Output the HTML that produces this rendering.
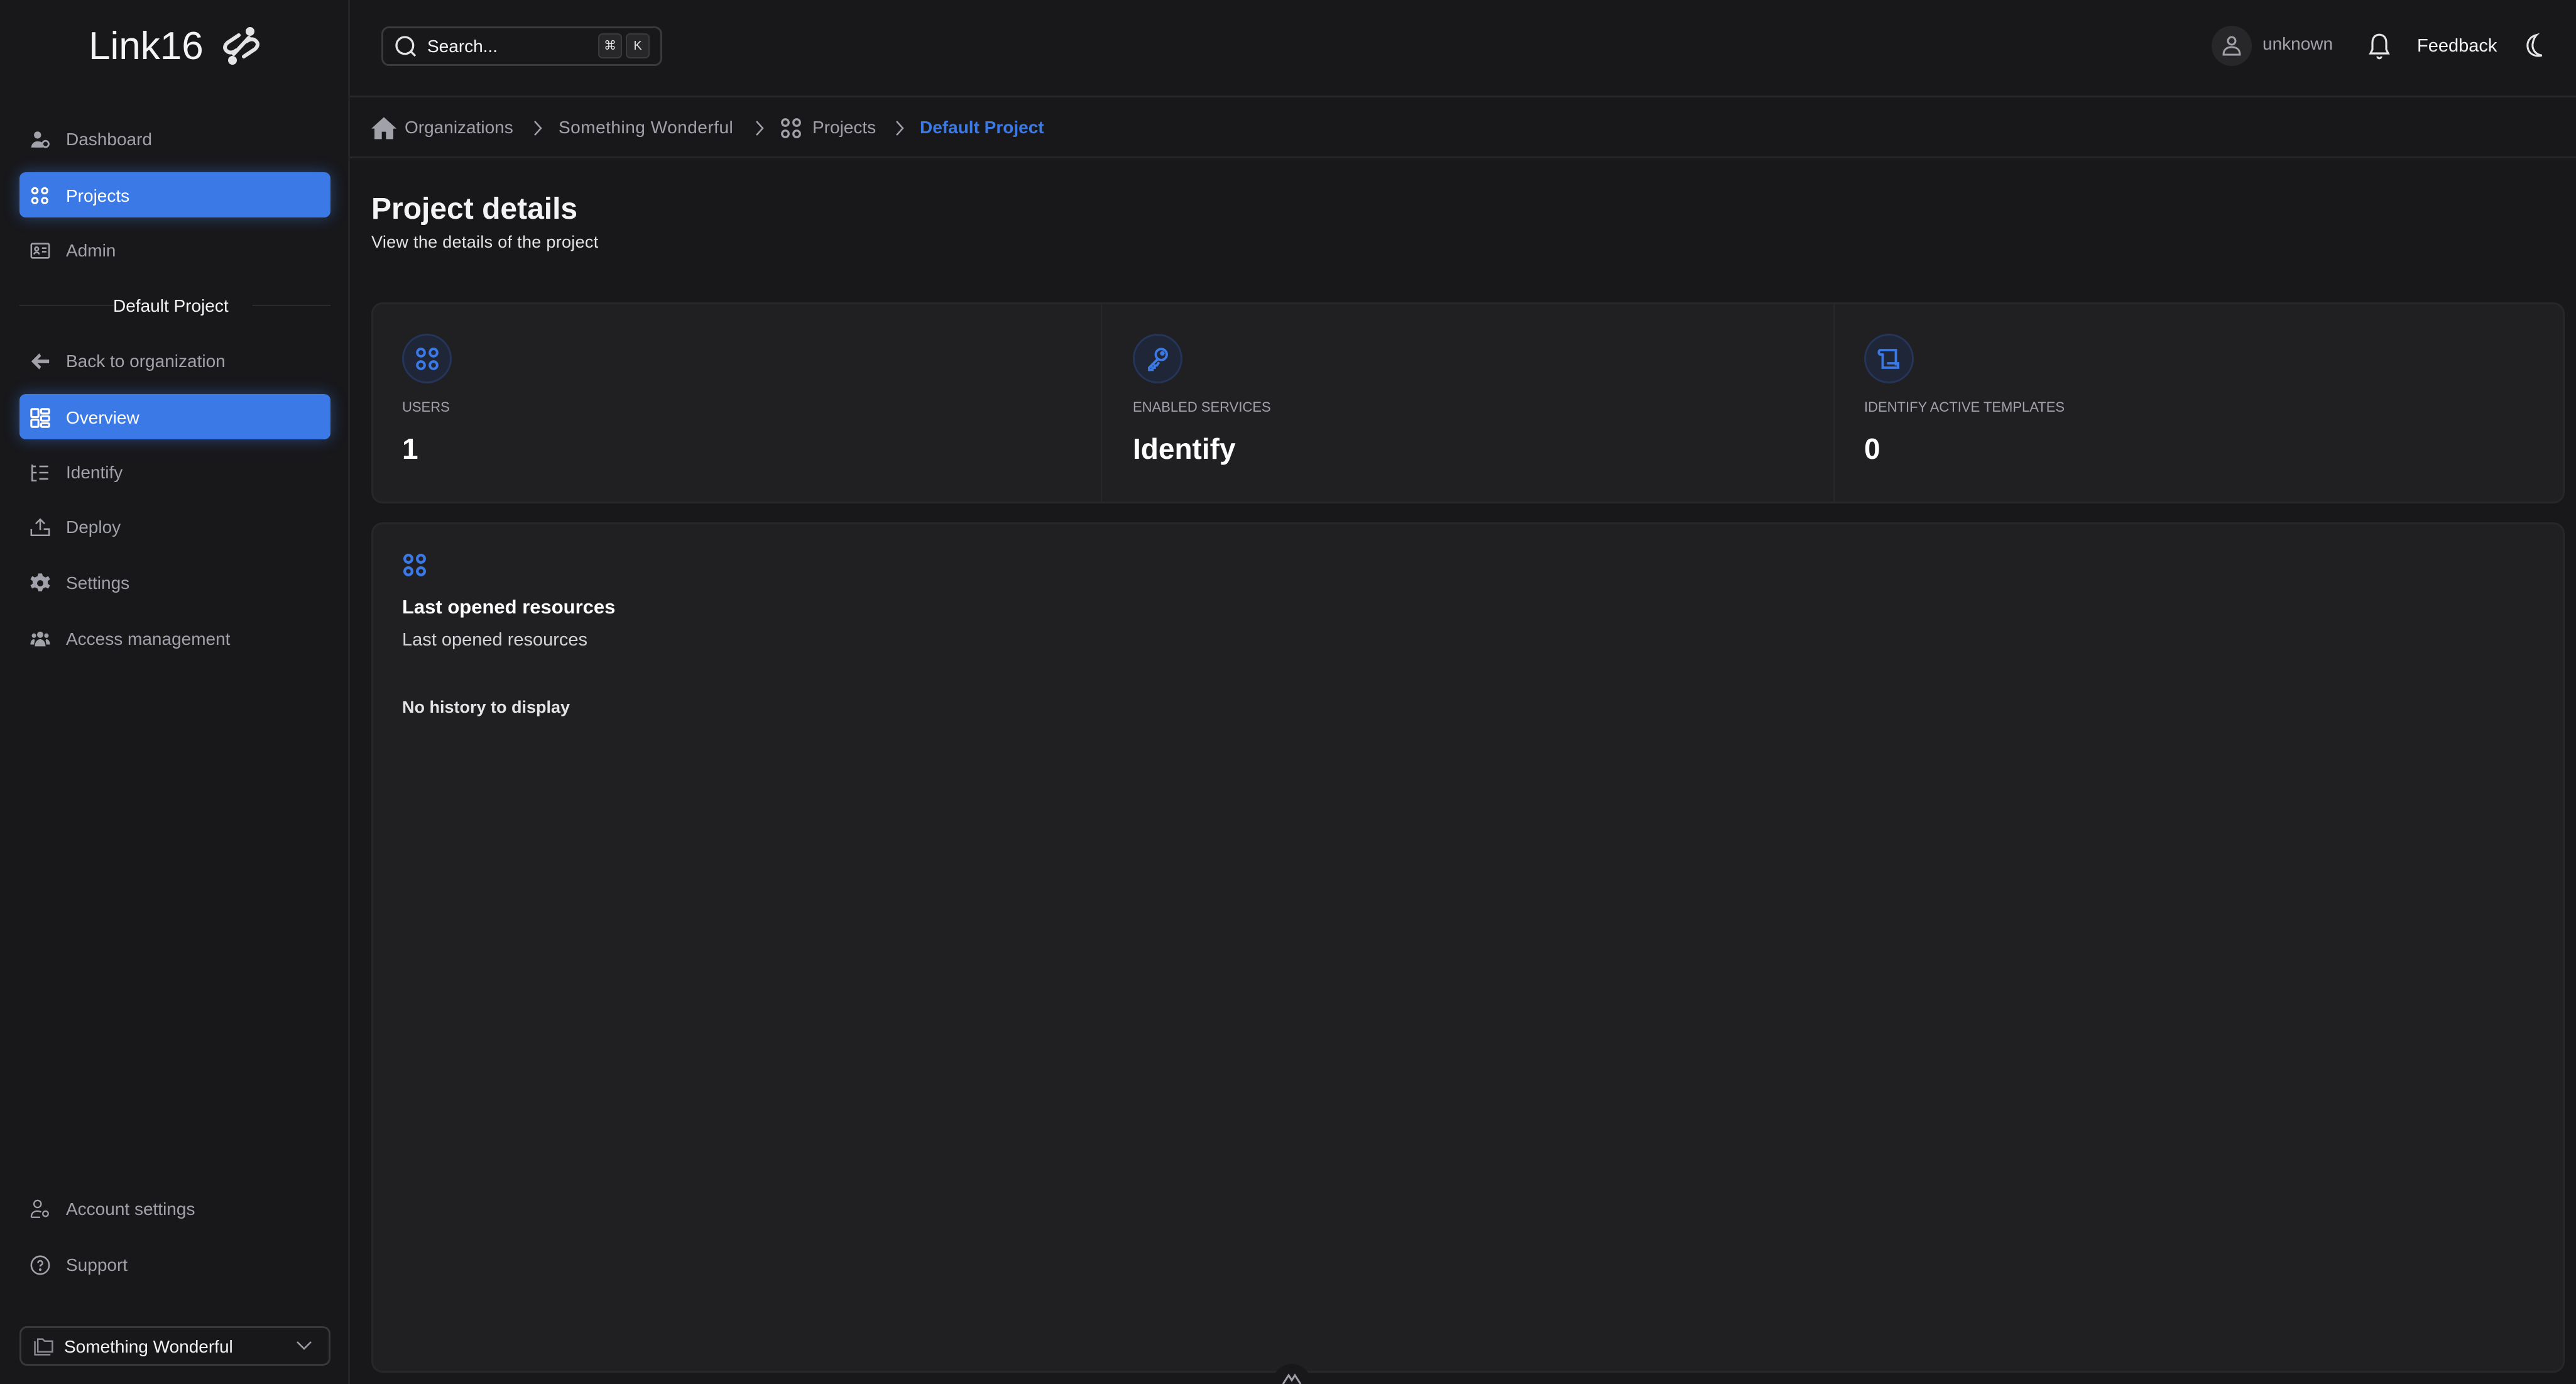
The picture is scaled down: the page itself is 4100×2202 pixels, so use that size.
<!DOCTYPE html>
<html><head><meta charset="utf-8"><style>
*{margin:0;padding:0;box-sizing:border-box}
html,body{width:4100px;height:2202px;overflow:hidden;background:#18181b}
#w{position:relative;width:4100px;height:2202px;overflow:hidden;background:#18181b;font-family:"Liberation Sans",sans-serif;color:#e4e4e7}
.a{position:absolute}
.side{left:0;top:0;width:557px;height:2202px;background:#18181b;border-right:3px solid #232326}
.nav{position:absolute;left:31px;width:495px;height:72px;display:flex;align-items:center;font-size:28px;color:#a1a1aa;padding-left:16px;padding-top:4px}
.nav svg{width:34px;height:34px;margin-right:24px;flex:none}
.nav.act{background:#3b79e6;color:#fff;border-radius:10px;box-shadow:0 0 24px rgba(59,121,230,.45)}
.t{position:absolute;white-space:nowrap}
.card{position:absolute;background:#202023;border:3px solid #27272a;border-radius:18px}
.ic{position:absolute;width:79px;height:79px;border-radius:50%;background:#1f2637;border:3px solid #243559;display:flex;align-items:center;justify-content:center}
.lbl{font-size:22px;color:#a1a1aa}
.val{font-size:46px;font-weight:bold;color:#fff}
</style></head><body><div id="w">
<div class="a side"></div>
<div class="t" style="left:141px;top:38px;font-size:62px;color:#f4f4f5">Link16</div>
<svg class="a" style="left:350px;top:42px" width="68" height="62" viewBox="0 0 68 62" fill="none" stroke="#e4e4e7" stroke-width="6" stroke-linecap="round"><path d="M30 14 L12 26 Q4 34 12 40 Q18 44 26 38"/><path d="M38 48 L56 36 Q64 28 56 22 Q50 18 42 24"/><path d="M22 44 L46 18"/><circle cx="48" cy="8" r="4" fill="#e4e4e7"/><circle cx="20" cy="54" r="4" fill="#e4e4e7"/></svg>

<div class="nav" style="top:184px"><svg viewBox="0 0 24 24" fill="#a1a1aa"><circle cx="9" cy="7" r="4"/><path d="M2 21c0-5 4-7 7-7s5 1 6 2v5z"/><circle cx="18" cy="17" r="3.5" fill="none" stroke="#a1a1aa" stroke-width="2"/></svg>Dashboard</div>
<div class="nav act" style="top:274px"><svg viewBox="0 0 24 24" fill="none" stroke="#fff" stroke-width="2.2"><circle cx="6" cy="6" r="3"/><circle cx="17" cy="6" r="3"/><circle cx="6" cy="17" r="3"/><circle cx="17" cy="17" r="3"/></svg>Projects</div>
<div class="nav" style="top:361px"><svg viewBox="0 0 24 24" fill="none" stroke="#a1a1aa" stroke-width="1.8"><rect x="2" y="4" width="20" height="16" rx="1.5"/><circle cx="8" cy="10" r="2"/><path d="M5 16c1-3 5-3 6 0M14 9h5M14 13h5"/></svg>Admin</div>
<div class="a" style="left:31px;top:485px;width:150px;border-top:2px solid #2a2a2e"></div>
<div class="a" style="left:402px;top:485px;width:124px;border-top:2px solid #2a2a2e"></div>
<div class="t" style="left:180px;top:471px;font-size:28px;color:#f4f4f5">Default Project</div>
<div class="nav" style="top:537px"><svg viewBox="0 0 24 24" fill="#a1a1aa"><path d="M11 3 L2 12 L11 21 L13 18 L9 14 H22 V10 H9 L13 6Z"/></svg>Back to organization</div>
<div class="nav act" style="top:627px"><svg viewBox="0 0 24 24" fill="none" stroke="#fff" stroke-width="2.2"><rect x="2" y="2" width="8" height="9" rx="1"/><rect x="2" y="14" width="8" height="8" rx="1"/><rect x="13" y="2" width="9" height="5" rx="1"/><rect x="13" y="10" width="9" height="5" rx="1"/><rect x="13" y="18" width="9" height="4" rx="1"/></svg>Overview</div>
<div class="nav" style="top:714px"><svg viewBox="0 0 24 24" fill="none" stroke="#a1a1aa" stroke-width="1.8"><path d="M3 3v18h5M3 12h5M11 5h10M11 12h10M11 19h10M3 5h4"/></svg>Identify</div>
<div class="nav" style="top:801px"><svg viewBox="0 0 24 24" fill="none" stroke="#a1a1aa" stroke-width="1.8"><path d="M12 15V3M7 8l5-5 5 5M2 14v7h20v-7h-6"/></svg>Deploy</div>
<div class="nav" style="top:890px"><svg viewBox="0 0 24 24" fill="#a1a1aa"><path d="M10 1h4l1 3 3 1.5 3-1.5 2 3.5-2.5 2v3l2.5 2-2 3.5-3-1.5-3 1.5-1 3h-4l-1-3-3-1.5-3 1.5-2-3.5 2.5-2v-3L1 7.5 3 4l3 1.5L9 4z"/><circle cx="12" cy="12" r="3.5" fill="#18181b"/></svg>Settings</div>
<div class="nav" style="top:979px"><svg viewBox="0 0 24 24" fill="#a1a1aa"><circle cx="12" cy="7" r="3.5"/><circle cx="5" cy="8" r="2.5"/><circle cx="19" cy="8" r="2.5"/><path d="M6 20c0-5 3-8 6-8s6 3 6 8zM1 18c0-4 2-6 4-6l1 1-1 5zM23 18c0-4-2-6-4-6l-1 1 1 5z"/></svg>Access management</div>
<div class="nav" style="top:1886px"><svg viewBox="0 0 24 24" fill="none" stroke="#a1a1aa" stroke-width="1.6"><circle cx="9" cy="6" r="4"/><path d="M2 21c0-5 3-7 7-7 2 0 3 .5 4 1M2 21h10"/><circle cx="18" cy="17" r="3"/></svg>Account settings</div>
<div class="nav" style="top:1975px"><svg viewBox="0 0 24 24" fill="none" stroke="#a1a1aa" stroke-width="1.8"><circle cx="12" cy="12" r="10"/><path d="M9.5 9.5a2.5 2.5 0 1 1 3.5 2.3c-.7.4-1 1-1 1.7"/><circle cx="12" cy="17" r=".6" fill="#a1a1aa"/></svg>Support</div>
<div class="a" style="left:31px;top:2110px;width:495px;height:63px;border:3px solid #38383c;border-radius:12px;display:flex;align-items:center;padding-left:18px;padding-top:3px;font-size:28px;color:#f4f4f5"><svg width="38" height="34" viewBox="0 0 24 22" fill="none" stroke="#8a8a92" stroke-width="1.6" style="margin-right:12px"><path d="M2 5v14h16"/><path d="M5 3h5l2 2h8v11H5z"/></svg>Something Wonderful<svg class="a" style="right:26px;top:20px" width="26" height="16" viewBox="0 0 26 16" fill="none" stroke="#a1a1aa" stroke-width="2.5"><path d="M2 2l11 11 11-11"/></svg></div>

<div class="a" style="left:557px;top:152px;width:3543px;border-top:3px solid #27272a"></div>
<div class="a" style="left:557px;top:249px;width:3543px;border-top:3px solid #27272a"></div>
<div class="a" style="left:607px;top:42px;width:447px;height:63px;border:3px solid #3a3a3e;border-radius:12px"></div>
<svg class="a" style="left:626px;top:54px" width="40" height="40" viewBox="0 0 24 24" fill="none" stroke="#e4e4e7" stroke-width="2"><circle cx="11" cy="11" r="8"/><path d="M17 17l4 4"/></svg>
<div class="t" style="left:680px;top:58px;font-size:28px;color:#f4f4f5">Search...</div>
<div class="a" style="left:952px;top:53px;width:38px;height:40px;border:2px solid #3a3a3e;border-radius:7px;background:#27272a;font-size:20px;text-align:center;line-height:36px;color:#e4e4e7">⌘</div>
<div class="a" style="left:996px;top:53px;width:38px;height:40px;border:2px solid #3a3a3e;border-radius:7px;background:#27272a;font-size:20px;text-align:center;line-height:36px;color:#e4e4e7">K</div>

<div class="a" style="left:3520px;top:41px;width:64px;height:64px;border-radius:50%;background:#27272a"></div>
<svg class="a" style="left:3536px;top:56px" width="32" height="34" viewBox="0 0 32 34" fill="none" stroke="#a1a1aa" stroke-width="3"><circle cx="16" cy="9" r="6"/><path d="M3 31c0-9 6-12 13-12s13 3 13 12z"/></svg>
<div class="t" style="left:3601px;top:54px;font-size:28px;color:#a1a1aa">unknown</div>
<svg class="a" style="left:3768px;top:52px" width="38" height="44" viewBox="0 0 24 28" fill="none" stroke="#e4e4e7" stroke-width="2"><path d="M12 2c-4 0-7 3-7 8v7l-2 4h18l-2-4v-7c0-5-3-8-7-8zM10 24a2 2 0 0 0 4 0"/></svg>
<div class="t" style="left:3847px;top:57px;font-size:29px;color:#f4f4f5">Feedback</div>
<svg class="a" style="left:4016px;top:52px" width="34" height="44" viewBox="0 0 24 30" fill="none" stroke="#e4e4e7" stroke-width="2.2"><path d="M15 2C7 4 4 10 5 16c1 7 8 11 16 9C13 24 9 17 11 10c1-4 2-6 4-8z"/></svg>

<svg class="a" style="left:591px;top:184px" width="40" height="38" viewBox="0 0 24 22" fill="#a1a1aa"><path d="M12 1L0 12h3v10h7v-7h4v7h7V12h3z"/></svg>
<div class="t" style="left:644px;top:187px;font-size:28px;color:#a1a1aa">Organizations</div>
<svg class="a" style="left:848px;top:190px" width="16" height="28" viewBox="0 0 16 28" fill="none" stroke="#a1a1aa" stroke-width="2.5"><path d="M3 3l10 11-10 11"/></svg>
<div class="t" style="left:889px;top:187px;font-size:28px;color:#a1a1aa;letter-spacing:0.5px">Something Wonderful</div>
<svg class="a" style="left:1201px;top:190px" width="16" height="28" viewBox="0 0 16 28" fill="none" stroke="#a1a1aa" stroke-width="2.5"><path d="M3 3l10 11-10 11"/></svg>
<svg class="a" style="left:1241px;top:185px" width="36" height="38" viewBox="0 0 24 24" fill="none" stroke="#a1a1aa" stroke-width="2.2"><circle cx="6" cy="6" r="3.5"/><circle cx="18" cy="6" r="3.5"/><circle cx="6" cy="18" r="3.5"/><circle cx="18" cy="18" r="3.5"/></svg>
<div class="t" style="left:1293px;top:187px;font-size:28px;color:#a1a1aa">Projects</div>
<svg class="a" style="left:1424px;top:190px" width="16" height="28" viewBox="0 0 16 28" fill="none" stroke="#a1a1aa" stroke-width="2.5"><path d="M3 3l10 11-10 11"/></svg>
<div class="t" style="left:1464px;top:187px;font-size:28px;font-weight:bold;color:#3b79e6">Default Project</div>

<div class="t" style="left:591px;top:305px;font-size:48px;font-weight:bold;color:#f4f4f5">Project details</div>
<div class="t" style="left:591px;top:370px;font-size:27px;color:#e4e4e7;letter-spacing:0.3px">View the details of the project</div>

<div class="card" style="left:591px;top:481px;width:3491px;height:320px"></div>
<div class="a" style="left:1752px;top:484px;height:314px;border-left:2px solid #28282b"></div>
<div class="a" style="left:2918px;top:484px;height:314px;border-left:2px solid #28282b"></div>
<div class="ic" style="left:640px;top:531px"><svg width="40" height="40" viewBox="0 0 24 24" fill="none" stroke="#3b79e6" stroke-width="2.4"><circle cx="6" cy="6" r="3.5"/><circle cx="18" cy="6" r="3.5"/><circle cx="6" cy="18" r="3.5"/><circle cx="18" cy="18" r="3.5"/></svg></div>
<div class="t lbl" style="left:640px;top:635px">USERS</div>
<div class="t val" style="left:640px;top:687px">1</div>
<div class="ic" style="left:1803px;top:531px"><svg width="42" height="42" viewBox="0 0 24 24" fill="none" stroke="#3b79e6" stroke-width="2.2"><circle cx="15" cy="8" r="5"/><path d="M12 12L4 20v2h3v-2h2v-2h2l2-3"/><circle cx="16" cy="7" r="1" fill="#3b79e6"/></svg></div>
<div class="t lbl" style="left:1803px;top:635px">ENABLED SERVICES</div>
<div class="t val" style="left:1803px;top:687px">Identify</div>
<div class="ic" style="left:2967px;top:531px"><svg width="42" height="42" viewBox="0 0 24 24" fill="none" stroke="#3b79e6" stroke-width="2.2"><path d="M4 4h14v14M4 4c-2 0-2 4 0 4h2v12h14v-4H10"/></svg></div>
<div class="t lbl" style="left:2967px;top:635px">IDENTIFY ACTIVE TEMPLATES</div>
<div class="t val" style="left:2967px;top:687px">0</div>

<div class="card" style="left:591px;top:831px;width:3491px;height:1353px"></div>
<svg class="a" style="left:640px;top:879px" width="40" height="40" viewBox="0 0 24 24" fill="none" stroke="#3b79e6" stroke-width="2.6"><circle cx="6" cy="6" r="3.5"/><circle cx="18" cy="6" r="3.5"/><circle cx="6" cy="18" r="3.5"/><circle cx="18" cy="18" r="3.5"/></svg>
<div class="t" style="left:640px;top:948px;font-size:31px;font-weight:bold;color:#fff">Last opened resources</div>
<div class="t" style="left:640px;top:1002px;font-size:29px;color:#d4d4d8">Last opened resources</div>
<div class="t" style="left:640px;top:1110px;font-size:27px;font-weight:bold;color:#e4e4e7">No history to display</div>

<div class="a" style="left:2025px;top:2170px;width:62px;height:62px;border-radius:50%;background:#18181b"></div>
<svg class="a" style="left:2040px;top:2184px" width="32" height="18" viewBox="0 0 32 18" fill="none" stroke="#a1a1aa" stroke-width="3"><path d="M2 18L11 4l5 8 5-8 9 14"/></svg>
</div></body></html>
